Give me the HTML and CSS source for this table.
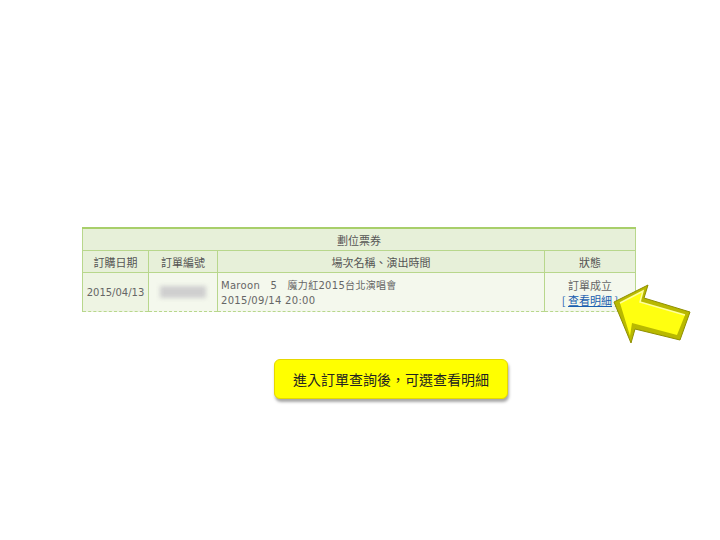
FILE: index.html
```html
<!DOCTYPE html>
<html lang="zh-Hant">
<head>
    <meta charset="UTF-8" />
    <meta name="viewport" content="width=device-width, initial-scale=1" />
    <title>訂單查詢</title>
    <link rel="stylesheet" href="styles.css">
</head>
<body>

    <div class="page">
        <table class="orders">
            <tr>
                <th colspan="4" class="caption">劃位票券</th>
            </tr>
            <tr>
                <th class="col-date">訂購日期</th>
                <th class="col-no">訂單編號</th>
                <th class="col-show">場次名稱、演出時間</th>
                <th class="col-status">狀態</th>
            </tr>
            <tr class="row">
                <td class="date">2015/04/13</td>
                <td class="no"><span class="blur"></span></td>
                <td class="show">
                    Maroon&nbsp;&nbsp;&nbsp;5&nbsp;&nbsp;&nbsp;魔力紅2015台北演唱會<br>
                    2015/09/14 20:00
                </td>
                <td class="status">
                    訂單成立<br>
                    <span class="detail">[&nbsp;<a href="#">查看明細</a>&nbsp;]</span>
                </td>
            </tr>
        </table>

        <div class="note">進入訂單查詢後，可選查看明細</div>

        <!-- 提示箭頭 -->
        <svg class="arrow" width="84" height="64" viewBox="608 282 84 64">
            <polygon points="614,302 648,285 644,298 690,312 680,340 635,329 631,343" fill="#b9b900" stroke="#8f8f00" stroke-width="1" />
            <polygon points="620,303 643,291 640,302 685,315 677,335 632,323 630,336" fill="#ffff10" />
            <polyline points="620,303 643,291 640,302 685,315" fill="none" stroke="#ffff9a" stroke-width="1.5" />
        </svg>
    </div>

</body>
</html>
```

FILE: styles.css
```css
body {
    margin: 0;
    background-color: #fff;
    font-family: "DejaVu Sans", "Noto Sans CJK TC", sans-serif;
}

.page {
    position: relative;
    padding: 227px 0 0 82px;
    height: 313px;
}

.orders {
    width: 554px;
    border-collapse: collapse;
    font-size: 10px;
    color: #666;
    border-top: 2px solid #a8cf6a;
}

.orders th {
    height: 21px;
    padding: 0;
    background-color: #e7f0d9;
    border: 1px solid #b8d78c;
    font-family: "Noto Sans CJK TC", sans-serif;
    font-size: 11px;
    font-weight: normal;
    color: #555;
    text-align: center;
}

.orders th.caption {
    border-top: none;
}

.col-date { width: 65px; }
.col-no { width: 68px; }
.col-status { width: 90px; }

.row td {
    height: 33px;
    padding: 0;
    background-color: #f4f8ed;
    border-left: 1px solid #b8d78c;
    border-right: 1px solid #b8d78c;
    border-bottom: 1px dashed #b8d78c;
    line-height: 15px;
}

.row td.date {
    background-color: #eef4e3;
    text-align: center;
    font-size: 10px;
}

.row td.no {
    text-align: center;
}

.blur {
    display: inline-block;
    width: 46px;
    height: 12px;
    margin-top: 3px;
    background-color: #cfcfcf;
    filter: blur(2px);
}

.row td.show {
    padding-left: 3px;
    vertical-align: top;
    padding-top: 5px;
    letter-spacing: 0.3px;
}

.row td.status {
    text-align: center;
    font-family: "Noto Sans CJK TC", sans-serif;
    font-size: 11px;
    vertical-align: top;
    padding-top: 5px;
    white-space: nowrap;
}

.detail {
    color: #1a5fb0;
}

.detail a {
    color: #1a5fb0;
    text-decoration: underline;
}

.note {
    width: 234px;
    height: 40px;
    margin: 47px 0 0 192px;
    background-color: #ffff00;
    border: 1px solid #e6d800;
    border-radius: 6px;
    box-shadow: 1px 3px 3px rgba(0, 0, 0, 0.35);
    font-family: "Noto Sans CJK TC", sans-serif;
    font-size: 14px;
    line-height: 38px;
    color: #222;
    text-align: center;
    box-sizing: border-box;
}

.arrow {
    position: absolute;
    left: 608px;
    top: 282px;
}
```
